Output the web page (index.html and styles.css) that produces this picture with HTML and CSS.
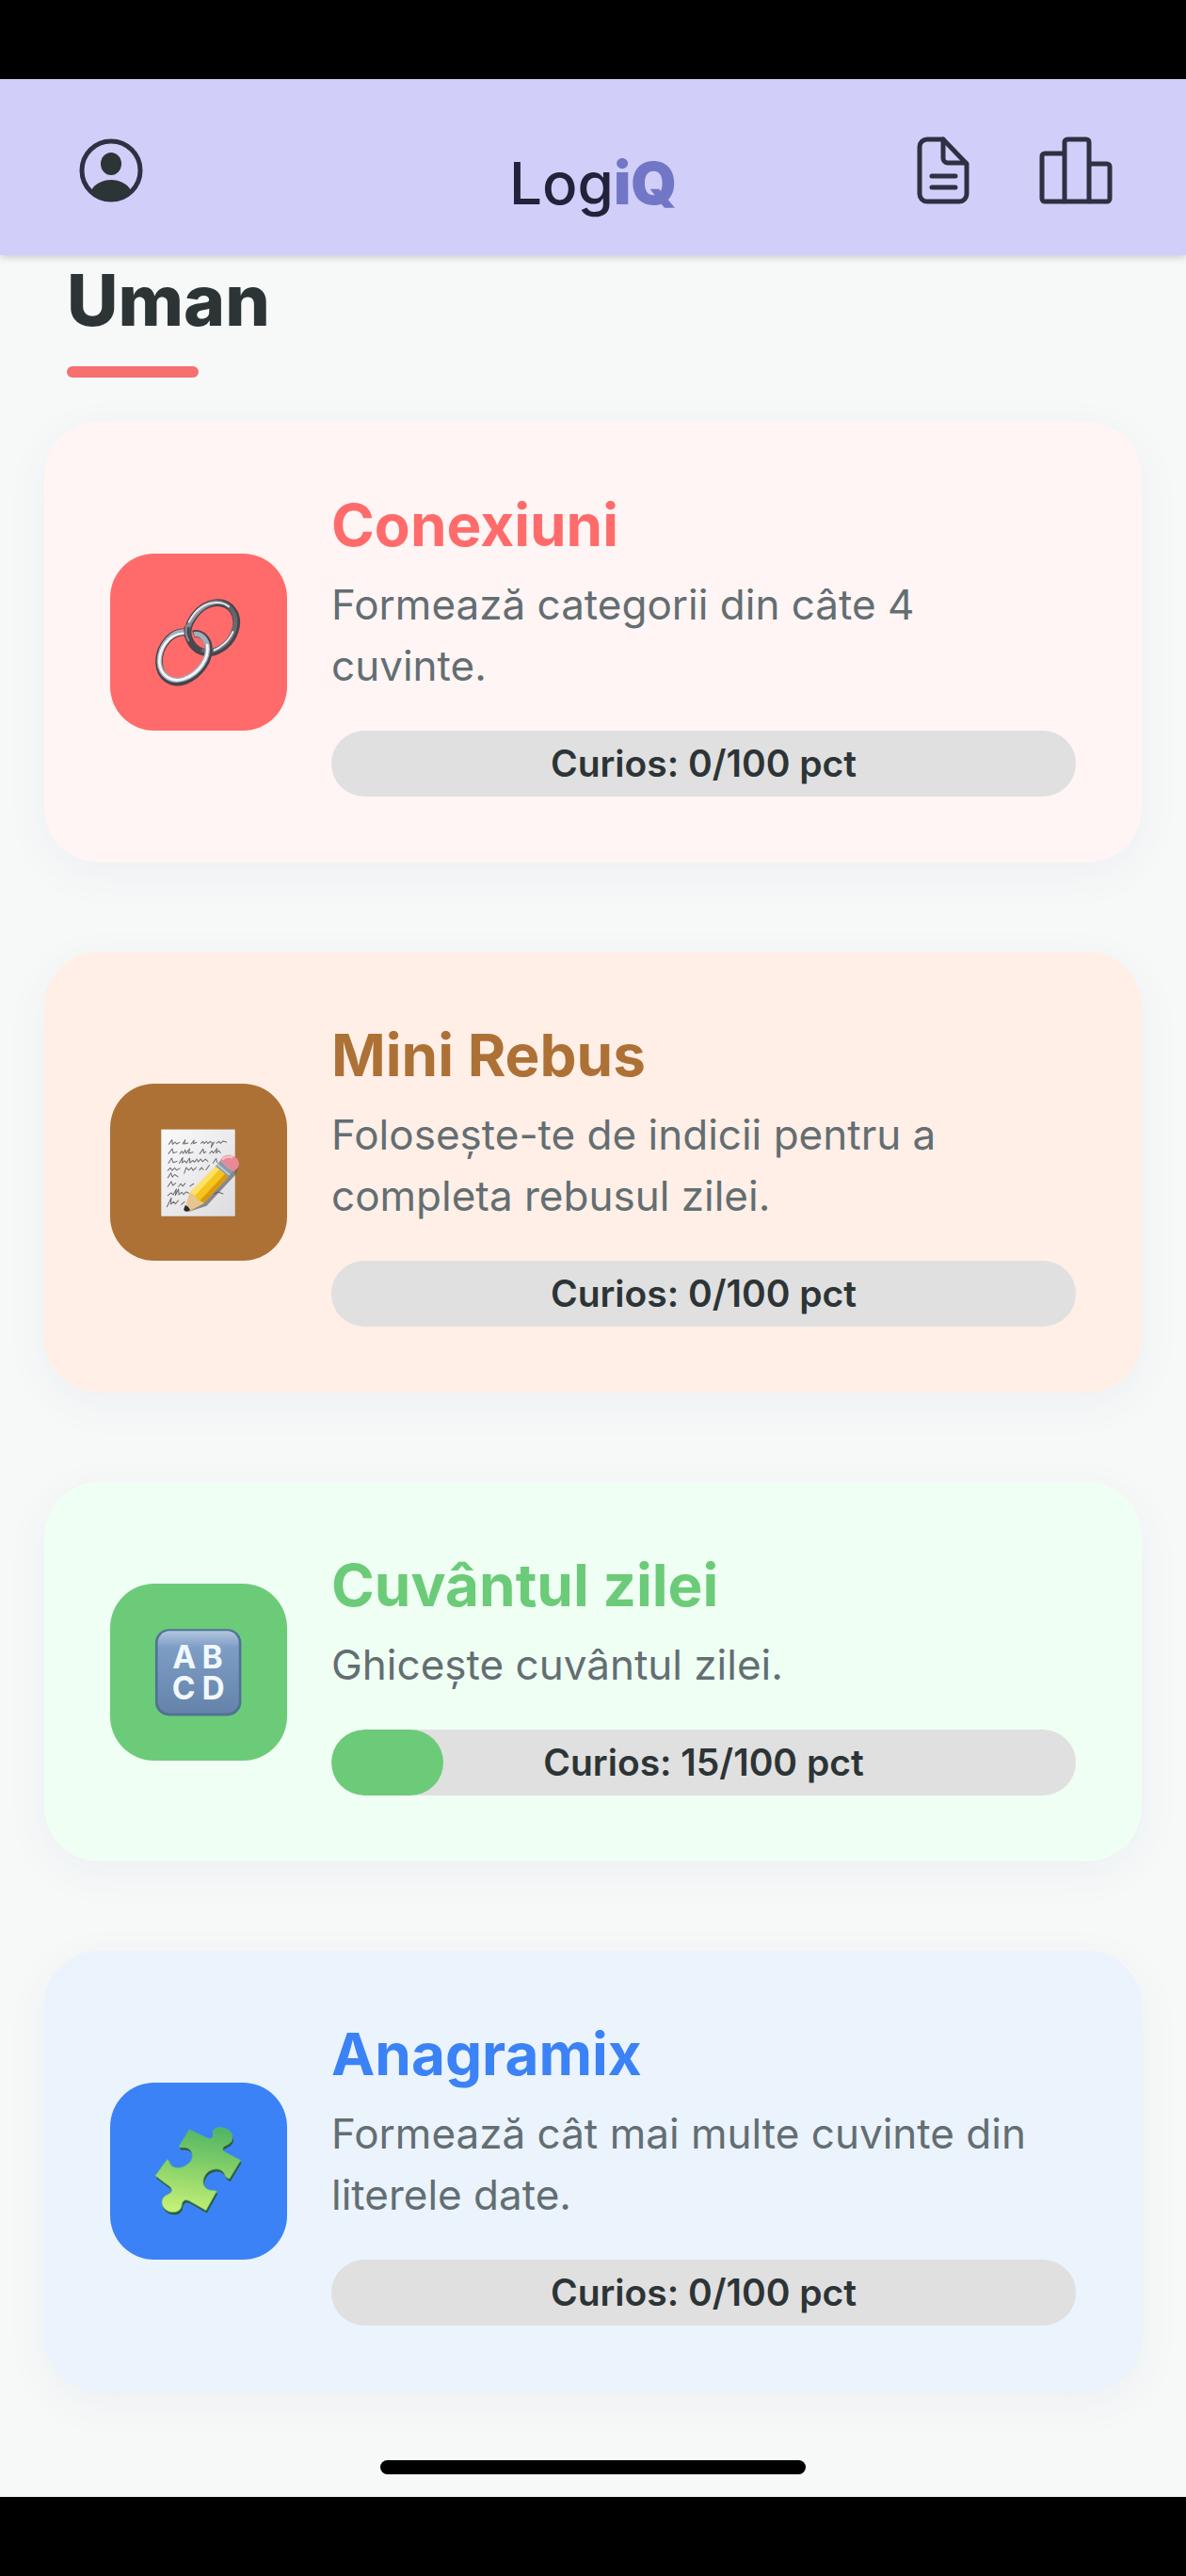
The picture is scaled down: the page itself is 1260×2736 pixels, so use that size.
FILE: index.html
```html
<!DOCTYPE html>
<html lang="ro">
<head>
    <meta charset="UTF-8">
    <meta name="viewport" content="width=device-width, initial-scale=1.0">
    <title>LogiQ</title>
    <link rel="stylesheet" href="styles.css">
</head>
<body>
    <header class="header">
        <div class="header-side">
            <button class="icon-btn" aria-label="Profil">
                <svg width="68" height="68" viewBox="0 0 68 68">
                    <circle cx="34" cy="34" r="31" fill="none" stroke="#2d3142" stroke-width="5"/>
                    <ellipse cx="34" cy="27" rx="11" ry="12" fill="#2d3436"/>
                    <path d="M13 55C17 48 25 44 34 44s17 4 21 11c-5 7-13 11-21 11s-16-4-21-11z" fill="#2d3436"/>
                </svg>
            </button>
        </div>
        <div class="logo">Log<span class="logo-iq">iQ</span></div>
        <div class="header-side header-right">
            <button class="icon-btn" aria-label="Reguli">
                <svg width="56" height="72" viewBox="0 0 56 72" fill="none" stroke="#2d3142" stroke-width="5" stroke-linecap="round" stroke-linejoin="round">
                    <path d="M28 3H11a8 8 0 0 0-8 8v50a8 8 0 0 0 8 8h34a8 8 0 0 0 8-8V29z"/>
                    <path d="M28 3v20a5 5 0 0 0 5 5h19"/>
                    <path d="M16 42h25M16 54h25"/>
                </svg>
            </button>
            <button class="icon-btn" aria-label="Clasament">
                <svg width="78" height="72" viewBox="0 0 78 72" fill="none" stroke="#2d3142" stroke-width="5" stroke-linejoin="round">
                    <path d="M27 69H6a3 3 0 0 1-3-3V21a3 3 0 0 1 3-3h21"/>
                    <path d="M27 69V6a3 3 0 0 1 3-3h20a3 3 0 0 1 3 3v63z"/>
                    <path d="M53 29h19a3 3 0 0 1 3 3v34a3 3 0 0 1-3 3H53"/>
                </svg>
            </button>
        </div>
    </header>

    <main class="content">
        <h1 class="section-title">Uman</h1>

        <div class="games">
            <a class="card conexiuni" href="#">
                <div class="tile">
                    <svg viewBox="52 56 561 561" fill="none">
                        <defs>
                            <linearGradient id="chainTop" x1="0" y1="0" x2="1" y2="1">
                                <stop offset="0" stop-color="#d5dae2"/>
                                <stop offset="0.4" stop-color="#5a5a60"/>
                                <stop offset="1" stop-color="#77777e"/>
                            </linearGradient>
                        </defs>
                        <!-- upper link -->
                        <path d="M302 325C286 285 330 218 385 212C435 207 464 252 448 300C436 340 400 368 366 370C330 370 312 350 302 325z" stroke="#47444b" stroke-width="23"/>
                        <path d="M300 320C288 282 332 218 385 211C433 207 459 248 445 297C433 335 400 362 366 365C330 364 310 346 300 320z" stroke="url(#chainTop)" stroke-width="14"/>
                        <path d="M302 272C320 238 350 213 388 211C404 210 418 215 428 224M441 304C428 335 400 355 382 362" stroke="#e4e7ee" stroke-width="6" stroke-linecap="round"/>
                        <!-- lower link -->
                        <path d="M302 308C252 292 206 346 207 402C210 448 245 474 288 460C338 441 371 390 364 347C358 320 334 304 316 311" stroke="#47444b" stroke-width="23"/>
                        <path d="M300 306C252 292 207 346 208 400C211 443 246 466 286 453C334 436 367 387 360 346C354 321 334 307 318 312" stroke="#a4adbb" stroke-width="16"/>
                        <path d="M284 309C238 312 207 356 208 400C211 443 246 466 286 453C334 436 367 387 360 346" stroke="#f4f6f9" stroke-width="8" stroke-linecap="round"/>
                        <path d="M296 288C290 322 310 350 340 364" stroke="#4a474f" stroke-width="18"/>
                        <path d="M296 282C289 300 293 320 302 334" stroke="#8b8c94" stroke-width="6"/>
                    </svg>
                </div>
                <div class="info">
                    <h2>Conexiuni</h2>
                    <p>Formează categorii din câte 4 cuvinte.</p>
                    <div class="progress"><span class="progress-text">Curios: 0/100 pct</span></div>
                </div>
            </a>

            <a class="card rebus" href="#">
                <div class="tile">
                    <svg viewBox="52 65 561 561" fill="none">
                        <defs>
                            <linearGradient id="paper" x1="0" y1="0" x2="1" y2="1">
                                <stop offset="0" stop-color="#fafafa"/>
                                <stop offset="1" stop-color="#dcdce0"/>
                            </linearGradient>
                        </defs>
                        <rect x="214" y="210" width="234" height="275" fill="url(#paper)"/>
                        <!-- handwriting -->
                        <g stroke="#6b6b72" stroke-width="3" stroke-linecap="round" stroke-linejoin="round">
                            <path d="M238 257l10-14 2 14 8-7 5 6 9-5M282 256l8-13-3 13 12-3M309 256l9-12-2 11 10-4M340 254l6-6 4 7 7-7 5 7 7-7 7 5-4 14 10-17M389 254l8-6 5 6 8-7 11 3"/>
                            <path d="M237 287l12-16 3 14 12-4M273 287l6-8 5 7 6-11 3 11 11-15-3 15 14-4M336 287l11-15 2 13 7-5M367 286l8-8 4 7 12-15-3 15 8-8 6 7"/>
                            <path d="M237 317l10-16 5 14 12-4M271 317l11-18-2 17 8-7 6 7 10-15 1 15 9-8 5 6 8-10 4 9 8-9 6 8 9-8 8 7M378 317l10-15 3 12"/>
                            <path d="M235 340l8-8 6 8 7-8 7 7 10-6M287 349l6-18 8 8 9-8 5 9 10-9M335 339l7-8 6 7M356 338l11-15"/>
                            <path d="M235 363l10-15 4 13 8-8 10 7M235 391l11-16 5 13 9-8M269 391l7-9 6 8 8-9M305 390l12-8"/>
                            <path d="M235 420l10-9 7 6 10-18-3 20 10-20 1 18 9-8 6 7 8-8 11 5M232 455l14-28-2 20 9-8 6 7 9-11M278 448l10-9M382 414l12-6 16 6"/>
                        </g>
                        <!-- pencil -->
                        <path d="M287 471l19-2 52-17 92-99 11-30-11-2z" fill="#55565a" opacity="0.65"/>
                        <path d="M291 455L304 412L386 327L427 360L349 444L306 468z" fill="#f5c51b"/>
                        <path d="M304 412L386 327L398 337L318 423z" fill="#ffe264"/>
                        <path d="M337 435L416 351L427 360L349 444z" fill="#d99a12"/>
                        <path d="M291 455L304 412L320 417L327 432L349 444L304 467z" fill="#e8c594"/>
                        <path d="M285 465L290 450Q300 453 306 465Q296 474 285 465z" fill="#29272a"/>
                        <path d="M386 327L401 308L440 344L427 360z" fill="#8b9dad"/>
                        <path d="M392 321L431 354" stroke="#c4cfda" stroke-width="5"/>
                        <path d="M401 308Q410 289 432 291Q462 298 461 322Q456 339 440 344z" fill="#e88997"/>
                        <path d="M410 303Q421 293 438 298" stroke="#f9bdc6" stroke-width="8" stroke-linecap="round"/>
                    </svg>
                </div>
                <div class="info">
                    <h2>Mini Rebus</h2>
                    <p>Folosește-te de indicii pentru a completa rebusul zilei.</p>
                    <div class="progress"><span class="progress-text">Curios: 0/100 pct</span></div>
                </div>
            </a>

            <a class="card cuvantul" href="#">
                <div class="tile">
                    <svg viewBox="52 67 561 561">
                        <defs>
                            <linearGradient id="key" x1="0" y1="0" x2="0" y2="1">
                                <stop offset="0" stop-color="#b3c6df"/>
                                <stop offset="0.2" stop-color="#7e9dc5"/>
                                <stop offset="1" stop-color="#6583aa"/>
                            </linearGradient>
                        </defs>
                        <rect x="195" y="211" width="273" height="275" rx="44" fill="#4f7396"/>
                        <rect x="203" y="217" width="257" height="260" rx="37" fill="url(#key)"/>
                        <g class="key-letters" text-anchor="middle">
                            <text x="287" y="335">A</text>
                            <text x="376" y="335">B</text>
                            <text x="285" y="434">C</text>
                            <text x="379" y="434">D</text>
                        </g>
                    </svg>
                </div>
                <div class="info">
                    <h2>Cuvântul zilei</h2>
                    <p>Ghicește cuvântul zilei.</p>
                    <div class="progress">
                        <div class="progress-fill" style="width: 15%"></div>
                        <span class="progress-text">Curios: 15/100 pct</span>
                    </div>
                </div>
            </a>

            <a class="card anagramix" href="#">
                <div class="tile">
                    <svg viewBox="52 66 561 561">
                        <defs>
                            <linearGradient id="puzzle" x1="0.6" y1="0" x2="0.45" y2="1">
                                <stop offset="0" stop-color="#50b565"/>
                                <stop offset="0.45" stop-color="#83cf68"/>
                                <stop offset="1" stop-color="#c5f077"/>
                            </linearGradient>
                            <path id="piece" d="M303 215L362 243C375 247 381 238 378 227C376 210 396 205 413 210C436 216 446 237 436 253C427 265 410 265 409 275C409 281 414 285 420 288L466 312L430 371C419 367 417 362 414 354C405 337 378 335 360 351C343 369 343 393 360 403C369 409 380 405 390 410L356 471L301 440C287 434 280 443 279 456C275 478 248 482 230 470C211 457 212 432 229 423C242 416 251 413 246 402C243 395 235 391 229 387L195 361L233 309C243 317 240 325 251 332C270 342 297 331 309 312C319 291 307 275 292 272C284 271 278 273 270 269z"/>
                        </defs>
                        <use href="#piece" x="3" y="8" fill="#2d5a3c"/>
                        <use href="#piece" fill="url(#puzzle)" stroke="#62bb6d" stroke-width="2"/>
                    </svg>
                </div>
                <div class="info">
                    <h2>Anagramix</h2>
                    <p>Formează cât mai multe cuvinte din literele date.</p>
                    <div class="progress"><span class="progress-text">Curios: 0/100 pct</span></div>
                </div>
            </a>
        </div>

        <div class="home-indicator"></div>
    </main>
</body>
</html>
```
FILE: styles.css
```css
:root {
    --text-dark: #2d3436;
    --text-muted: #636e72;
}

* {
    box-sizing: border-box;
}

body {
    margin: 0;
    padding: 84px 0;
    min-height: 100vh;
    display: flex;
    flex-direction: column;
    background: #000;
    color: var(--text-dark);
    font-family: Inter, "Liberation Sans", sans-serif;
}

.header {
    position: relative;
    display: flex;
    align-items: center;
    height: 187px;
    padding: 6px 78px 0;
    background: #d1cff9;
    box-shadow: 0 2px 8px rgba(0,0,0,0.2);
}

.header-side {
    flex: 1;
    display: flex;
    align-items: center;
    gap: 74px;
}

.header-right {
    justify-content: flex-end;
}

.icon-btn {
    display: flex;
    padding: 6px;
    border: none;
    background: none;
    cursor: pointer;
}

.header-right .icon-btn {
    padding: 0;
}

.logo {
    padding-top: 28px;
    font-size: 62px;
    line-height: 72px;
    font-weight: 500;
    color: #22223a;
}

.logo-iq {
    font-weight: 900;
    color: #7177c6;
}

.content {
    flex: 1;
    display: flex;
    flex-direction: column;
    padding: 0 47px 24px;
    background: #f7f9f9;
}

.section-title {
    margin: 0 24px 47px;
    font-size: 75px;
    line-height: 96px;
    font-weight: 800;
}

.section-title::after {
    content: "";
    display: block;
    width: 140px;
    height: 12px;
    margin-top: 22px;
    border-radius: 6px;
    background: #f5706e;
}

.games {
    display: flex;
    flex-direction: column;
    gap: 95px;
}

.card {
    display: flex;
    align-items: center;
    gap: 47px;
    padding: 70px;
    border-radius: 58px;
    color: inherit;
    text-decoration: none;
    box-shadow: 0 12px 48px rgba(45,52,80,0.05);
}

.tile {
    flex: none;
    width: 188px;
    height: 188px;
    border-radius: 47px;
    background: var(--game-color);
}

.tile svg {
    display: block;
    width: 100%;
    height: 100%;
}

.key-letters {
    fill: #f1f8fc;
    font-size: 100px;
    font-weight: 700;
}

.info {
    flex: 1;
}

.info h2 {
    margin: 0 0 12px;
    font-size: 62px;
    line-height: 80px;
    font-weight: 700;
    color: var(--game-color);
}

.info p {
    margin: 0 0 36px;
    font-size: 44px;
    line-height: 65px;
    color: var(--text-muted);
}

.progress {
    position: relative;
    height: 70px;
    border-radius: 35px;
    background: #e0e0e0;
    text-align: center;
    overflow: hidden;
}

.progress-fill {
    position: absolute;
    top: 0;
    left: 0;
    height: 100%;
    border-radius: 35px;
    background: var(--game-color);
}

.progress-text {
    position: relative;
    font-size: 39px;
    line-height: 70px;
    font-weight: 600;
}

.conexiuni {
    --game-color: #ff6b6b;
    background: #fff5f4;
}

.rebus {
    --game-color: #ad7136;
    background: #ffefe6;
}

.cuvantul {
    --game-color: #6ccb78;
    background: #f0fff4;
}

.anagramix {
    --game-color: #3b82f6;
    background: #ebf3fc;
}

.home-indicator {
    align-self: center;
    width: 452px;
    height: 15px;
    margin-top: auto;
    border-radius: 8px;
    background: #000;
}
```
